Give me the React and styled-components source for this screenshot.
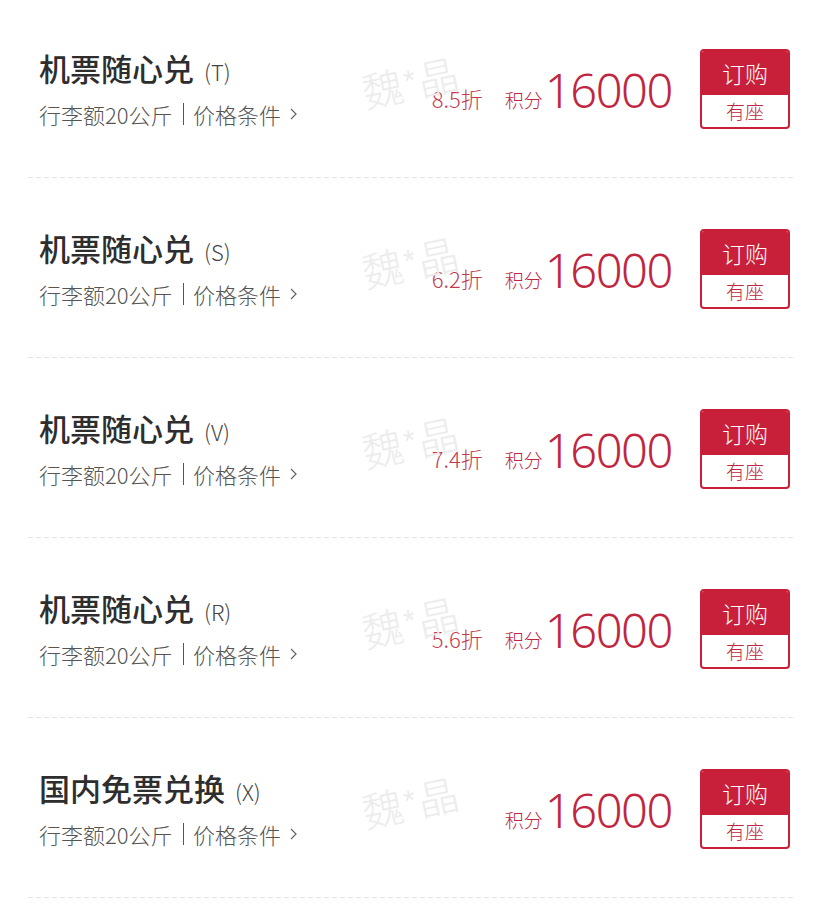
import styled, { createGlobalStyle } from "styled-components";

const GlobalStyle = createGlobalStyle`
  html, body {
    margin: 0;
    padding: 0;
    background: #ffffff;
  }
  body {
    font-family: "Noto Sans CJK SC", "Noto Sans", sans-serif;
    color: #333;
  }
`;

const fares = [
  { name: "机票随心兑", cls: "T", discount: "8.5折", points: "16000" },
  { name: "机票随心兑", cls: "S", discount: "6.2折", points: "16000" },
  { name: "机票随心兑", cls: "V", discount: "7.4折", points: "16000" },
  { name: "机票随心兑", cls: "R", discount: "5.6折", points: "16000" },
  { name: "国内免票兑换", cls: "X", discount: null, points: "16000" },
];

function Chevron() {
  return (
    <svg width="9" height="16" viewBox="0 0 9 16">
      <path d="M2 3 L7 8 L2 13" fill="none" stroke="#666" strokeWidth="1.2" />
    </svg>
  );
}

function App() {
  return (
    <Page>
      <GlobalStyle />
      {fares.map((fare, i) => (
        <Item key={i}>
          <Row>
            <Watermark>
              魏<Star>*</Star>晶
            </Watermark>
            <Info>
              <Title>
                {fare.name}
                <ClassCode>({fare.cls})</ClassCode>
              </Title>
              <Terms>
                行李额20公斤
                <Sep />
                价格条件
                <ChevronWrap>
                  <Chevron />
                </ChevronWrap>
              </Terms>
            </Info>
            <Price>
              {fare.discount && <Discount>{fare.discount}</Discount>}
              <PointsLabel>积分</PointsLabel>
              <Points>{fare.points}</Points>
            </Price>
            <BuyButton>
              <BuyTop>订购</BuyTop>
              <BuyBottom>有座</BuyBottom>
            </BuyButton>
          </Row>
          <Divider />
        </Item>
      ))}
    </Page>
  );
}

const Page = styled.div`
  width: 828px;
  background: #fff;
`;

const Item = styled.div`
  height: 180px;
`;

const Row = styled.div`
  position: relative;
  height: 177px;
  display: flex;
  align-items: center;
  padding: 0 38px 0 39px;
  box-sizing: border-box;
`;

const Watermark = styled.div`
  position: absolute;
  left: 362px;
  top: 61px;
  font-size: 41px;
  font-weight: 300;
  color: #ececec;
  transform: rotate(-12deg);
  transform-origin: left center;
  pointer-events: none;
  white-space: nowrap;
`;

const Star = styled.span`
  font-family: "Liberation Sans", sans-serif;
  font-size: 30px;
  vertical-align: 8px;
  margin: 0 2px;
`;

const Info = styled.div`
  flex: 1;
  display: flex;
  flex-direction: column;
  gap: 8px;
  margin-top: -1px;
`;

const Title = styled.div`
  font-size: 31px;
  font-weight: 500;
  color: #2e2e2e;
  line-height: 40px;
  display: flex;
  align-items: baseline;
`;

const ClassCode = styled.span`
  font-size: 22px;
  font-weight: 300;
  color: #444;
  margin-left: 10px;
`;

const Terms = styled.div`
  font-size: 22px;
  font-weight: 300;
  color: #555;
  line-height: 30px;
  display: flex;
  align-items: center;
`;

const Sep = styled.span`
  display: inline-block;
  width: 1.5px;
  height: 22px;
  background: #555;
  margin: 0 9px 0 10px;
`;

const ChevronWrap = styled.span`
  display: inline-flex;
  margin-left: 8px;
`;

const Price = styled.div`
  display: flex;
  align-items: baseline;
  color: #c0263f;
  margin-right: 28px;
  margin-top: 2px;
`;

const Discount = styled.span`
  font-size: 22px;
  font-weight: 300;
  color: #c43a50;
  margin-right: 22px;
`;

const PointsLabel = styled.span`
  font-size: 19px;
  font-weight: 300;
  margin-right: 2px;
`;

const Points = styled.span`
  font-family: "Noto Sans", "Liberation Sans", sans-serif;
  font-weight: 300;
  font-size: 47px;
  line-height: 50px;
  letter-spacing: -1.4px;
`;

const BuyButton = styled.div`
  width: 90px;
  height: 80px;
  border: 2px solid #c8203b;
  border-radius: 4px;
  box-sizing: border-box;
  display: flex;
  flex-direction: column;
  overflow: hidden;
`;

const BuyTop = styled.div`
  height: 44px;
  background: #c8203b;
  color: #fff;
  font-size: 23px;
  font-weight: 300;
  display: flex;
  align-items: center;
  justify-content: center;
`;

const BuyBottom = styled.div`
  flex: 1;
  color: #c0263f;
  font-size: 19px;
  font-weight: 300;
  display: flex;
  align-items: center;
  justify-content: center;
`;

const Divider = styled.div`
  height: 1px;
  margin: 0 33px 0 28px;
  background-image: linear-gradient(to right, #e3e3e3 5px, transparent 5px);
  background-size: 8px 1px;
`;

export default App;
